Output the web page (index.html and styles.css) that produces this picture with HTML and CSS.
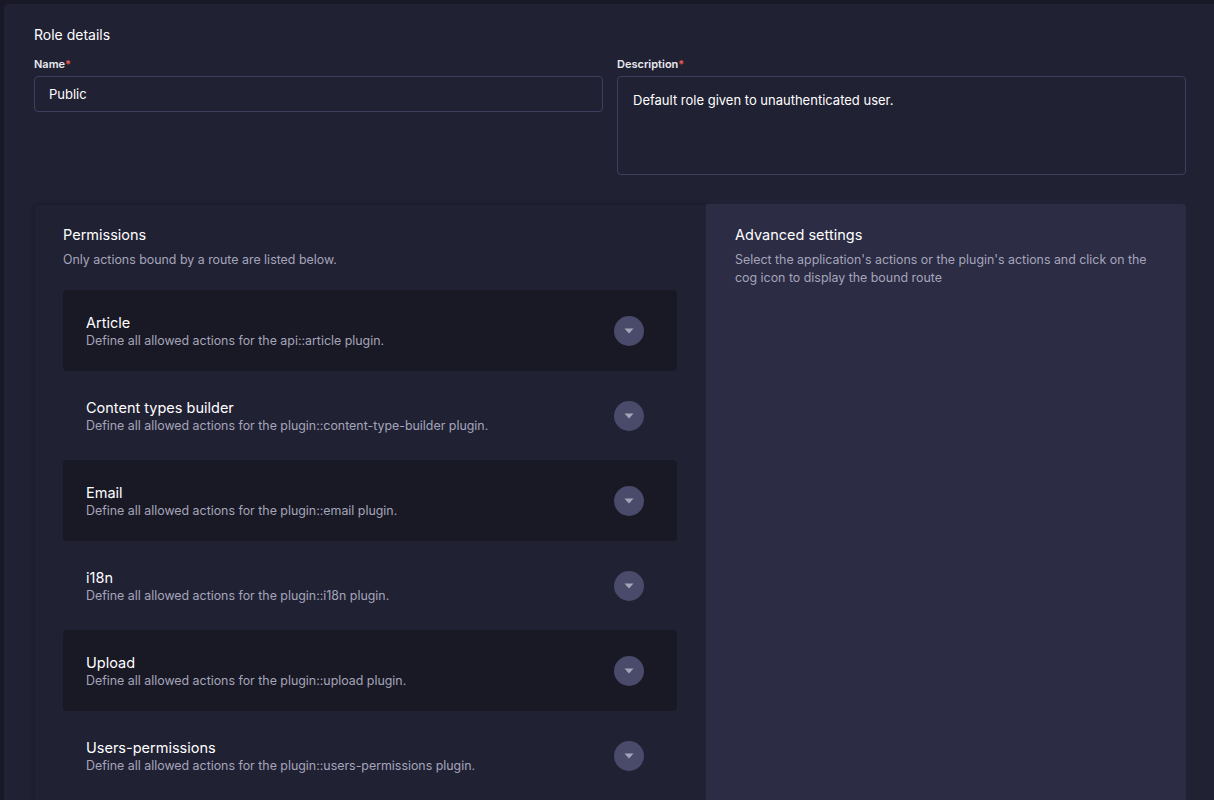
FILE: index.html
```html
<!DOCTYPE html>
<html lang="en">
<head>
<meta charset="utf-8">
<title>Role details</title>
<link rel="stylesheet" href="styles.css">
</head>
<body>
<main class="page">
  <section class="details">
    <h2 class="section-title">Role details</h2>
    <div class="fields">
      <div class="field">
        <label class="label">Name<span class="req">*</span></label>
        <div class="input">Public</div>
      </div>
      <div class="field">
        <label class="label">Description<span class="req">*</span></label>
        <div class="textarea">Default role given to unauthenticated user.</div>
      </div>
    </div>
  </section>

  <section class="perm-grid">
    <div class="permissions">
      <h3 class="panel-title">Permissions</h3>
      <p class="panel-sub">Only actions bound by a route are listed below.</p>
      <div class="rows">
        <div class="row dark">
          <div class="row-text"><div class="row-title">Article</div><div class="row-desc">Define all allowed actions for the api::article plugin.</div></div>
          <span class="toggle"><svg width="10" height="6" viewBox="0 0 10 6"><path d="M0.5 0.5h9L5 5.5z" fill="currentColor"/></svg></span>
        </div>
        <div class="row">
          <div class="row-text"><div class="row-title">Content types builder</div><div class="row-desc">Define all allowed actions for the plugin::content-type-builder plugin.</div></div>
          <span class="toggle"><svg width="10" height="6" viewBox="0 0 10 6"><path d="M0.5 0.5h9L5 5.5z" fill="currentColor"/></svg></span>
        </div>
        <div class="row dark">
          <div class="row-text"><div class="row-title">Email</div><div class="row-desc">Define all allowed actions for the plugin::email plugin.</div></div>
          <span class="toggle"><svg width="10" height="6" viewBox="0 0 10 6"><path d="M0.5 0.5h9L5 5.5z" fill="currentColor"/></svg></span>
        </div>
        <div class="row">
          <div class="row-text"><div class="row-title">i18n</div><div class="row-desc">Define all allowed actions for the plugin::i18n plugin.</div></div>
          <span class="toggle"><svg width="10" height="6" viewBox="0 0 10 6"><path d="M0.5 0.5h9L5 5.5z" fill="currentColor"/></svg></span>
        </div>
        <div class="row dark">
          <div class="row-text"><div class="row-title">Upload</div><div class="row-desc">Define all allowed actions for the plugin::upload plugin.</div></div>
          <span class="toggle"><svg width="10" height="6" viewBox="0 0 10 6"><path d="M0.5 0.5h9L5 5.5z" fill="currentColor"/></svg></span>
        </div>
        <div class="row">
          <div class="row-text"><div class="row-title">Users-permissions</div><div class="row-desc">Define all allowed actions for the plugin::users-permissions plugin.</div></div>
          <span class="toggle"><svg width="10" height="6" viewBox="0 0 10 6"><path d="M0.5 0.5h9L5 5.5z" fill="currentColor"/></svg></span>
        </div>
      </div>
    </div>
    <aside class="advanced">
      <h3 class="panel-title">Advanced settings</h3>
      <p class="panel-sub">Select the application's actions or the plugin's actions and click on the cog icon to display the bound route</p>
    </aside>
  </section>
</main>
</body>
</html>
```

FILE: styles.css
```css
* { box-sizing: border-box; }
html, body { margin: 0; padding: 0; }
body {
  background: #181826;
  font-family: Inter, "Noto Sans", "Liberation Sans", sans-serif;
  color: #ffffff;
  height: 800px;
  overflow: hidden;
}
.page {
  margin: 4px 0 0 4px;
  background: #212134;
  border-radius: 4px 0 0 0;
  padding: 21px 28px 0 30px;
  height: 796px;
}
.section-title {
  margin: 0;
  font-size: 14px;
  font-weight: 400;
  line-height: 20px;
}
.fields {
  display: grid;
  grid-template-columns: 1fr 1fr;
  gap: 14px;
  margin-top: 11px;
}
.field { display: flex; flex-direction: column; }
.label {
  font-size: 11px;
  font-weight: 600;
  line-height: 16px;
  color: #eaeaef;
  margin-bottom: 4px;
}
.req { color: #ee5e52; }
.input, .textarea {
  background: #212134;
  border: 1px solid #3f3d60;
  border-radius: 4px;
  font-size: 13px;
  color: #ffffff;
}
.input {
  height: 36px;
  padding: 0 14px;
  display: flex;
  align-items: center;
}
.textarea {
  height: 99px;
  padding: 15px 15px;
  line-height: 16px;
}
.perm-grid {
  margin-top: 29px;
  display: grid;
  grid-template-columns: 7fr 5fr;
  height: 600px;
}
.permissions {
  background: #212134;
  border: 1px solid #1c1c2d;
  border-right: 0;
  border-bottom: 0;
  border-radius: 4px 0 0 0;
  padding: 20px 29px 0 28px;
  box-shadow: 0 1px 4px rgba(10,10,20,0.3);
}
.advanced {
  background: #2c2c45;
  border-radius: 0 4px 0 0;
  padding: 21px 32px 0 29px;
}
.panel-title {
  margin: 0;
  font-size: 14.5px;
  font-weight: 400;
  line-height: 20px;
  color: #ffffff;
}
.panel-sub {
  margin: 6px 0 0 0;
  font-size: 12.4px;
  line-height: 18px;
  color: #a5a5ba;
}
.rows {
  margin-top: 21px;
  display: flex;
  flex-direction: column;
  gap: 4px;
}
.row {
  height: 81px;
  border-radius: 4px;
  padding: 1px 33px 0 23px;
  display: flex;
  align-items: center;
  justify-content: space-between;
}
.row.dark { background: #191925; }
.row-title {
  font-size: 14.5px;
  line-height: 19px;
  font-weight: 400;
  color: #ffffff;
}
.row-desc {
  font-size: 12.4px;
  line-height: 18px;
  color: #a5a5ba;
}
.toggle {
  width: 30px;
  height: 30px;
  border-radius: 50%;
  background: #4a4a6a;
  color: #a5a5ba;
  display: flex;
  align-items: center;
  justify-content: center;
  margin-top: -1px;
}
.toggle svg { display: block; }
```
